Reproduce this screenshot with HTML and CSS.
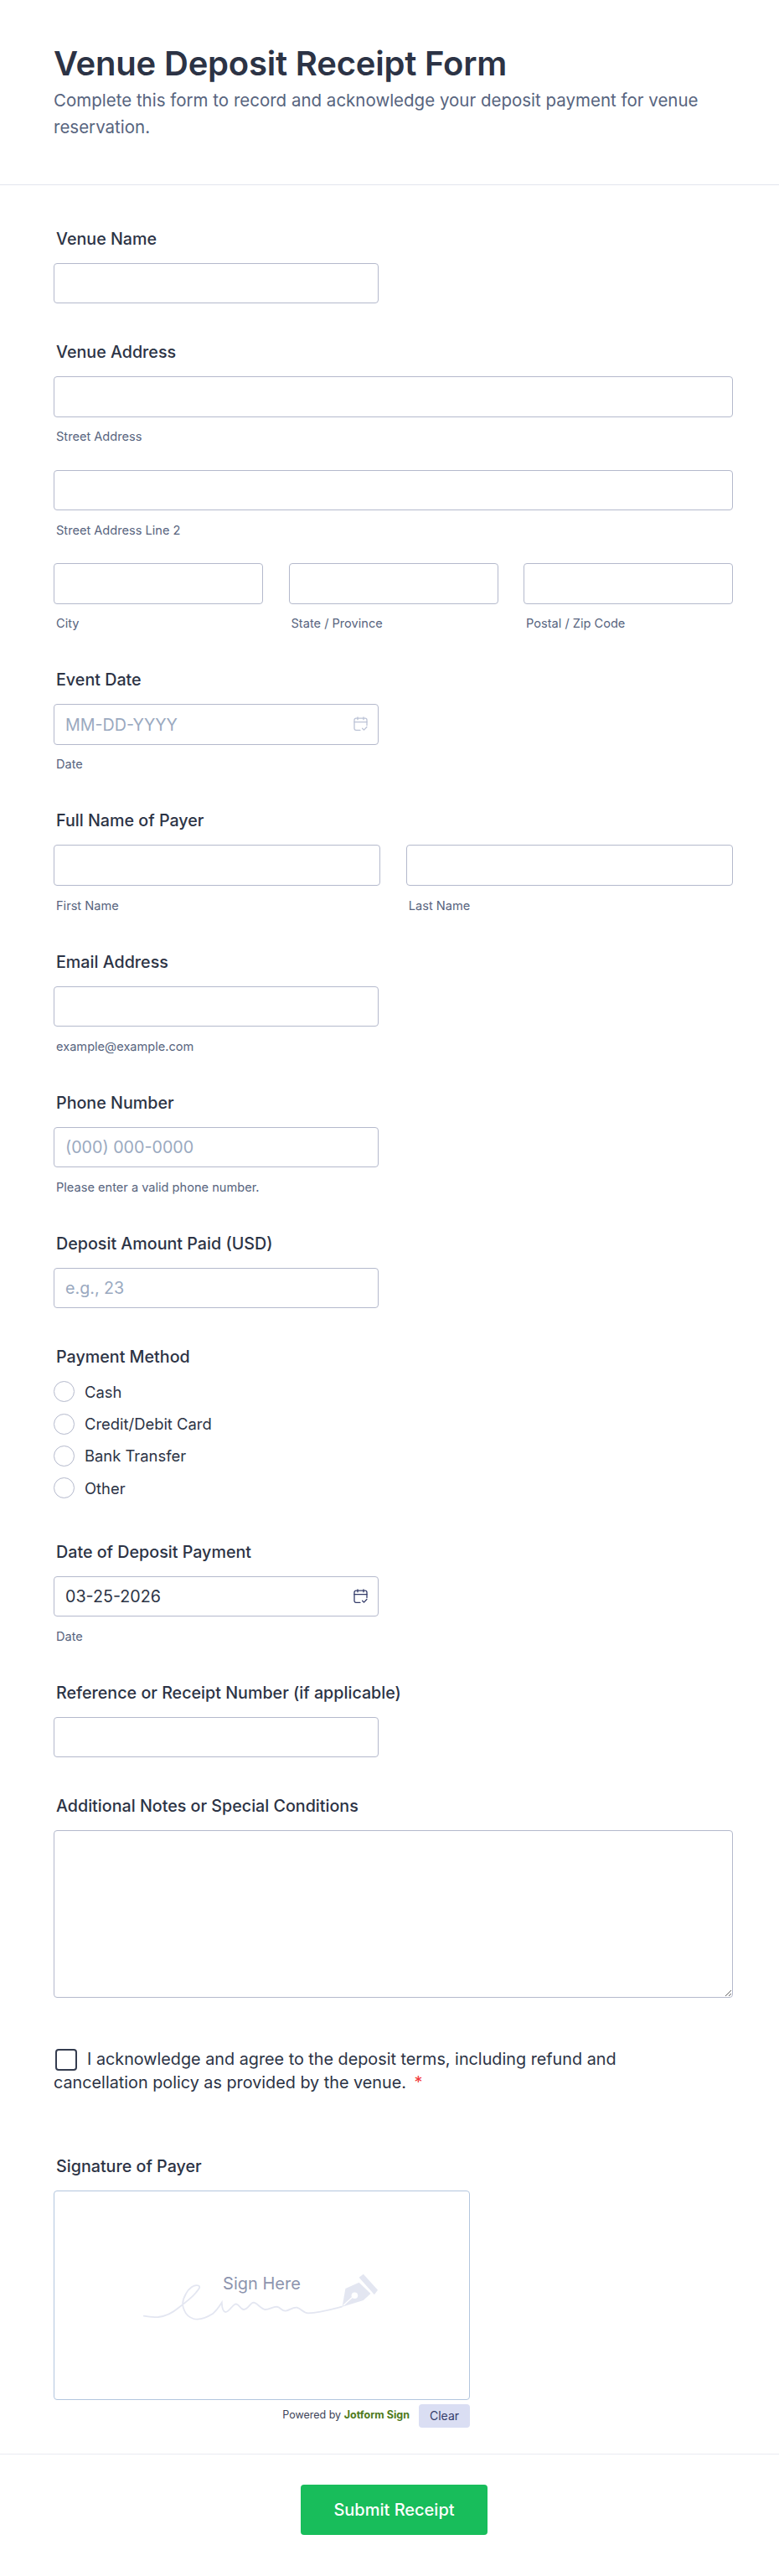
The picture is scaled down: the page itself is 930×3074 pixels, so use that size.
FILE: index.html
```html
<!DOCTYPE html>
<html lang="en">
<head>
    <meta charset="UTF-8">
    <meta name="viewport" content="width=device-width, initial-scale=1.0">
    <title>Venue Deposit Receipt Form</title>
    <link rel="stylesheet" href="styles.css">
</head>
<body>
    <form class="form">
        <header class="form-header">
            <h1>Venue Deposit Receipt Form</h1>
            <p>Complete this form to record and acknowledge your deposit payment for venue reservation.</p>
        </header>

        <div class="form-body">
            <div class="field">
                <label class="field-label">Venue Name</label>
                <input class="input half" type="text">
            </div>

            <div class="field">
                <label class="field-label">Venue Address</label>
                <input class="input" type="text">
                <div class="sublabel sublabel-gap">Street Address</div>
                <input class="input" type="text">
                <div class="sublabel sublabel-gap">Street Address Line 2</div>
                <div class="row-three">
                    <div>
                        <input class="input" type="text">
                        <div class="sublabel">City</div>
                    </div>
                    <div>
                        <input class="input" type="text">
                        <div class="sublabel">State / Province</div>
                    </div>
                    <div>
                        <input class="input" type="text">
                        <div class="sublabel">Postal / Zip Code</div>
                    </div>
                </div>
            </div>

            <div class="field">
                <label class="field-label">Event Date</label>
                <div class="date-wrap half">
                    <input class="input" type="text" placeholder="MM-DD-YYYY">
                    <svg class="date-icon date-icon-empty" viewBox="0 0 17 18" fill="none" stroke="currentColor" stroke-width="1.3" stroke-linecap="round" stroke-linejoin="round">
                        <path d="M8 16.3H3a2 2 0 0 1-2-2V4.2a2 2 0 0 1 2-2h11a2 2 0 0 1 2 2v6.3"/>
                        <path d="M1 6.6h15M5 .8v3M12 .8v3"/>
                        <path d="M10.6 14.2l1.9 1.9 3.4-3.6"/>
                    </svg>
                </div>
                <div class="sublabel">Date</div>
            </div>

            <div class="field">
                <label class="field-label">Full Name of Payer</label>
                <div class="row-two">
                    <div>
                        <input class="input" type="text">
                        <div class="sublabel">First Name</div>
                    </div>
                    <div>
                        <input class="input" type="text">
                        <div class="sublabel">Last Name</div>
                    </div>
                </div>
            </div>

            <div class="field">
                <label class="field-label">Email Address</label>
                <input class="input half" type="text">
                <div class="sublabel">example@example.com</div>
            </div>

            <div class="field">
                <label class="field-label">Phone Number</label>
                <input class="input half" type="text" placeholder="(000) 000-0000">
                <div class="sublabel">Please enter a valid phone number.</div>
            </div>

            <div class="field">
                <label class="field-label">Deposit Amount Paid (USD)</label>
                <input class="input half" type="text" placeholder="e.g., 23">
            </div>

            <div class="field field-radios">
                <label class="field-label">Payment Method</label>
                <div class="radio-list">
                    <label class="radio-item"><input type="radio" name="method">Cash</label>
                    <label class="radio-item"><input type="radio" name="method">Credit/Debit Card</label>
                    <label class="radio-item"><input type="radio" name="method">Bank Transfer</label>
                    <label class="radio-item"><input type="radio" name="method">Other</label>
                </div>
            </div>

            <div class="field">
                <label class="field-label">Date of Deposit Payment</label>
                <div class="date-wrap half">
                    <input class="input" type="text" value="03-25-2026">
                    <svg class="date-icon" viewBox="0 0 17 18" fill="none" stroke="currentColor" stroke-width="1.3" stroke-linecap="round" stroke-linejoin="round">
                        <path d="M8 16.3H3a2 2 0 0 1-2-2V4.2a2 2 0 0 1 2-2h11a2 2 0 0 1 2 2v6.3"/>
                        <path d="M1 6.6h15M5 .8v3M12 .8v3"/>
                        <path d="M10.6 14.2l1.9 1.9 3.4-3.6"/>
                    </svg>
                </div>
                <div class="sublabel">Date</div>
            </div>

            <div class="field">
                <label class="field-label">Reference or Receipt Number (if applicable)</label>
                <input class="input half" type="text">
            </div>

            <div class="field field-notes">
                <label class="field-label">Additional Notes or Special Conditions</label>
                <textarea class="input textarea"></textarea>
            </div>

            <div class="field field-agree">
                <label class="agree"><input type="checkbox">I acknowledge and agree to the deposit terms, including refund and cancellation policy as provided by the venue. <span class="required">*</span></label>
            </div>

            <div class="field field-sign">
                <label class="field-label">Signature of Payer</label>
                <div class="sign-pad">
                    <svg class="sign-art" viewBox="0 0 496 248" fill="none">
                        <path d="M106.7 148.7C113 150 118 150.5 124 150C133 149 141 145 148 139C156 133 164 127 168.8 121C172 117 175 114 172 112.5C167 110.5 160 116 156.7 122.7C153 129 152 136 155 142C157 147 160 150 166 152C173 154 181 151 189 146C194 142 197 137 199.8 132.7C200 137 200 143 204 144C209 144 213 134 217 134.3C221 135 222 141 226 141C231 141 234 132.7 237.7 132.7C242 133 246 140 251.5 141C257 141 260 137.7 265.3 137.7C270 138 271 143 276 142.7C281 142 284 138 289.4 138.7C295 140 297 145.5 303 145.3C316 145 330 141 343 137.7" stroke="#e3e6f1" stroke-width="1.8" stroke-linecap="round"/>
                        <path d="M343.6 137.7L347.4 116L363.6 108.7L377.4 122L368.8 130Z" fill="#e3e6f1"/>
                        <path d="M363.6 102.7L368.8 98.7L386 117.7L381.9 123.3Z" fill="#e3e6f1"/>
                        <circle cx="358.4" cy="124.3" r="3.8" fill="#fff"/>
                        <path d="M345 136L356 126" stroke="#fff" stroke-width="1.2"/>
                    </svg>
                    <span class="sign-here">Sign Here</span>
                </div>
                <div class="sign-foot">
                    <span class="powered">Powered by <b>Jotform Sign</b></span>
                    <button class="clear-btn" type="button">Clear</button>
                </div>
            </div>
        </div>

        <footer class="form-footer">
            <button class="submit-btn" type="button">Submit Receipt</button>
        </footer>
    </form>
</body>
</html>
```

FILE: styles.css
```css
* {
    box-sizing: border-box;
}
body {
    margin: 0;
    background: #fff;
    font-family: Inter, "Liberation Sans", sans-serif;
    color: #2c3345;
}
.form-header {
    height: 221px;
    padding: 48px 64px 0;
    border-bottom: 1px solid #e3e5ee;
}
.form-header h1 {
    margin: 0;
    font-size: 40px;
    line-height: 56px;
    font-weight: 600;
    letter-spacing: -0.2px;
    color: #2c3345;
}
.form-header p {
    margin: 0;
    font-size: 20.5px;
    line-height: 32px;
    color: #57647e;
}
.form-body {
    padding: 53.5px 55px 0 64px;
}
.field {
    margin-bottom: 48px;
}
.field-label {
    display: block;
    height: 20px;
    margin: 0 0 19px 3px;
    font-size: 19.7px;
    line-height: 20px;
    font-weight: 450;
    color: #2c3345;
}
.input {
    display: block;
    width: 100%;
    height: 48.6px;
    padding: 0 13px;
    border: 1px solid #b4b9cc;
    border-radius: 4px;
    background: #fff;
    font-family: inherit;
    font-size: 19.7px;
    color: #2c3345;
    outline: none;
}
.input::placeholder {
    color: #9aa9bf;
    opacity: 1;
}
.half {
    width: 388px;
}
.sublabel {
    height: 18px;
    margin: 14.5px 0 0 3px;
    font-size: 14.6px;
    line-height: 18px;
    color: #57647e;
}
.sublabel-gap {
    margin-bottom: 30.5px;
}
.row-three {
    display: grid;
    grid-template-columns: repeat(3, 1fr);
    gap: 30.5px;
}
.row-two {
    display: grid;
    grid-template-columns: repeat(2, 1fr);
    gap: 30.5px;
}
.date-wrap {
    position: relative;
}
.date-icon {
    position: absolute;
    top: 15px;
    right: 13px;
    width: 17px;
    height: 18px;
    color: #343c6a;
}
.date-icon-empty {
    color: #bcc3d6;
}
.field-radios {
    margin-bottom: 54px;
}
.radio-list {
    display: flex;
    flex-direction: column;
    gap: 14.3px;
    padding-top: 0.5px;
}
.radio-item {
    display: flex;
    align-items: center;
    height: 24px;
    font-size: 18.4px;
    color: #2c3345;
}
.radio-item input {
    appearance: none;
    width: 25px;
    height: 25px;
    margin: 0 12px 0 0;
    border: 1px solid #b4b9cc;
    border-radius: 50%;
    background: #fff;
}
.field-notes .textarea {
    height: 200px;
    resize: vertical;
}
.field-notes {
    margin-bottom: 58.5px;
}
.agree {
    display: block;
    font-size: 19.8px;
    line-height: 28px;
    color: #2c3345;
}
.agree input {
    appearance: none;
    display: inline-block;
    width: 26px;
    height: 26px;
    margin: 0 12px 0 2px;
    border: 2px solid #343c4f;
    border-radius: 4px;
    background: #fff;
    vertical-align: -7px;
}
.required {
    margin-left: 4px;
    color: #f23a3c;
}
.field-agree {
    margin-bottom: 76px;
    max-width: 760px;
}
.field-sign {
    margin-bottom: 0;
}
.sign-pad {
    position: relative;
    width: 497px;
    height: 250px;
    border: 1px solid #b3c6de;
    border-radius: 4px;
}
.sign-art {
    display: block;
    width: 496px;
    height: 248px;
}
.sign-here {
    position: absolute;
    top: 98px;
    left: 0;
    width: 100%;
    text-align: center;
    font-size: 20px;
    line-height: 24px;
    color: #8d94ae;
}
.sign-foot {
    display: flex;
    justify-content: flex-end;
    align-items: flex-start;
    width: 497px;
    margin-top: 5px;
}
.powered {
    margin: 5px 11px 0 0;
    font-size: 12.5px;
    line-height: 16px;
    color: #3d4458;
}
.powered b {
    font-weight: 700;
    color: #4e7a1a;
}
.clear-btn {
    width: 61px;
    height: 28px;
    padding: 0;
    border: 0;
    border-radius: 4px;
    background: #dadef3;
    font-family: inherit;
    font-size: 14px;
    color: #343c6a;
}
.form-footer {
    display: flex;
    justify-content: center;
    height: 146px;
    margin-top: 31px;
    padding: 36px 0 0 11px;
    border-top: 1px solid #e9ebf3;
}
.submit-btn {
    width: 223px;
    height: 60px;
    border: 0;
    border-radius: 4px;
    background: #18bd5b;
    font-family: inherit;
    font-size: 20px;
    font-weight: 450;
    color: #fff;
}
```
